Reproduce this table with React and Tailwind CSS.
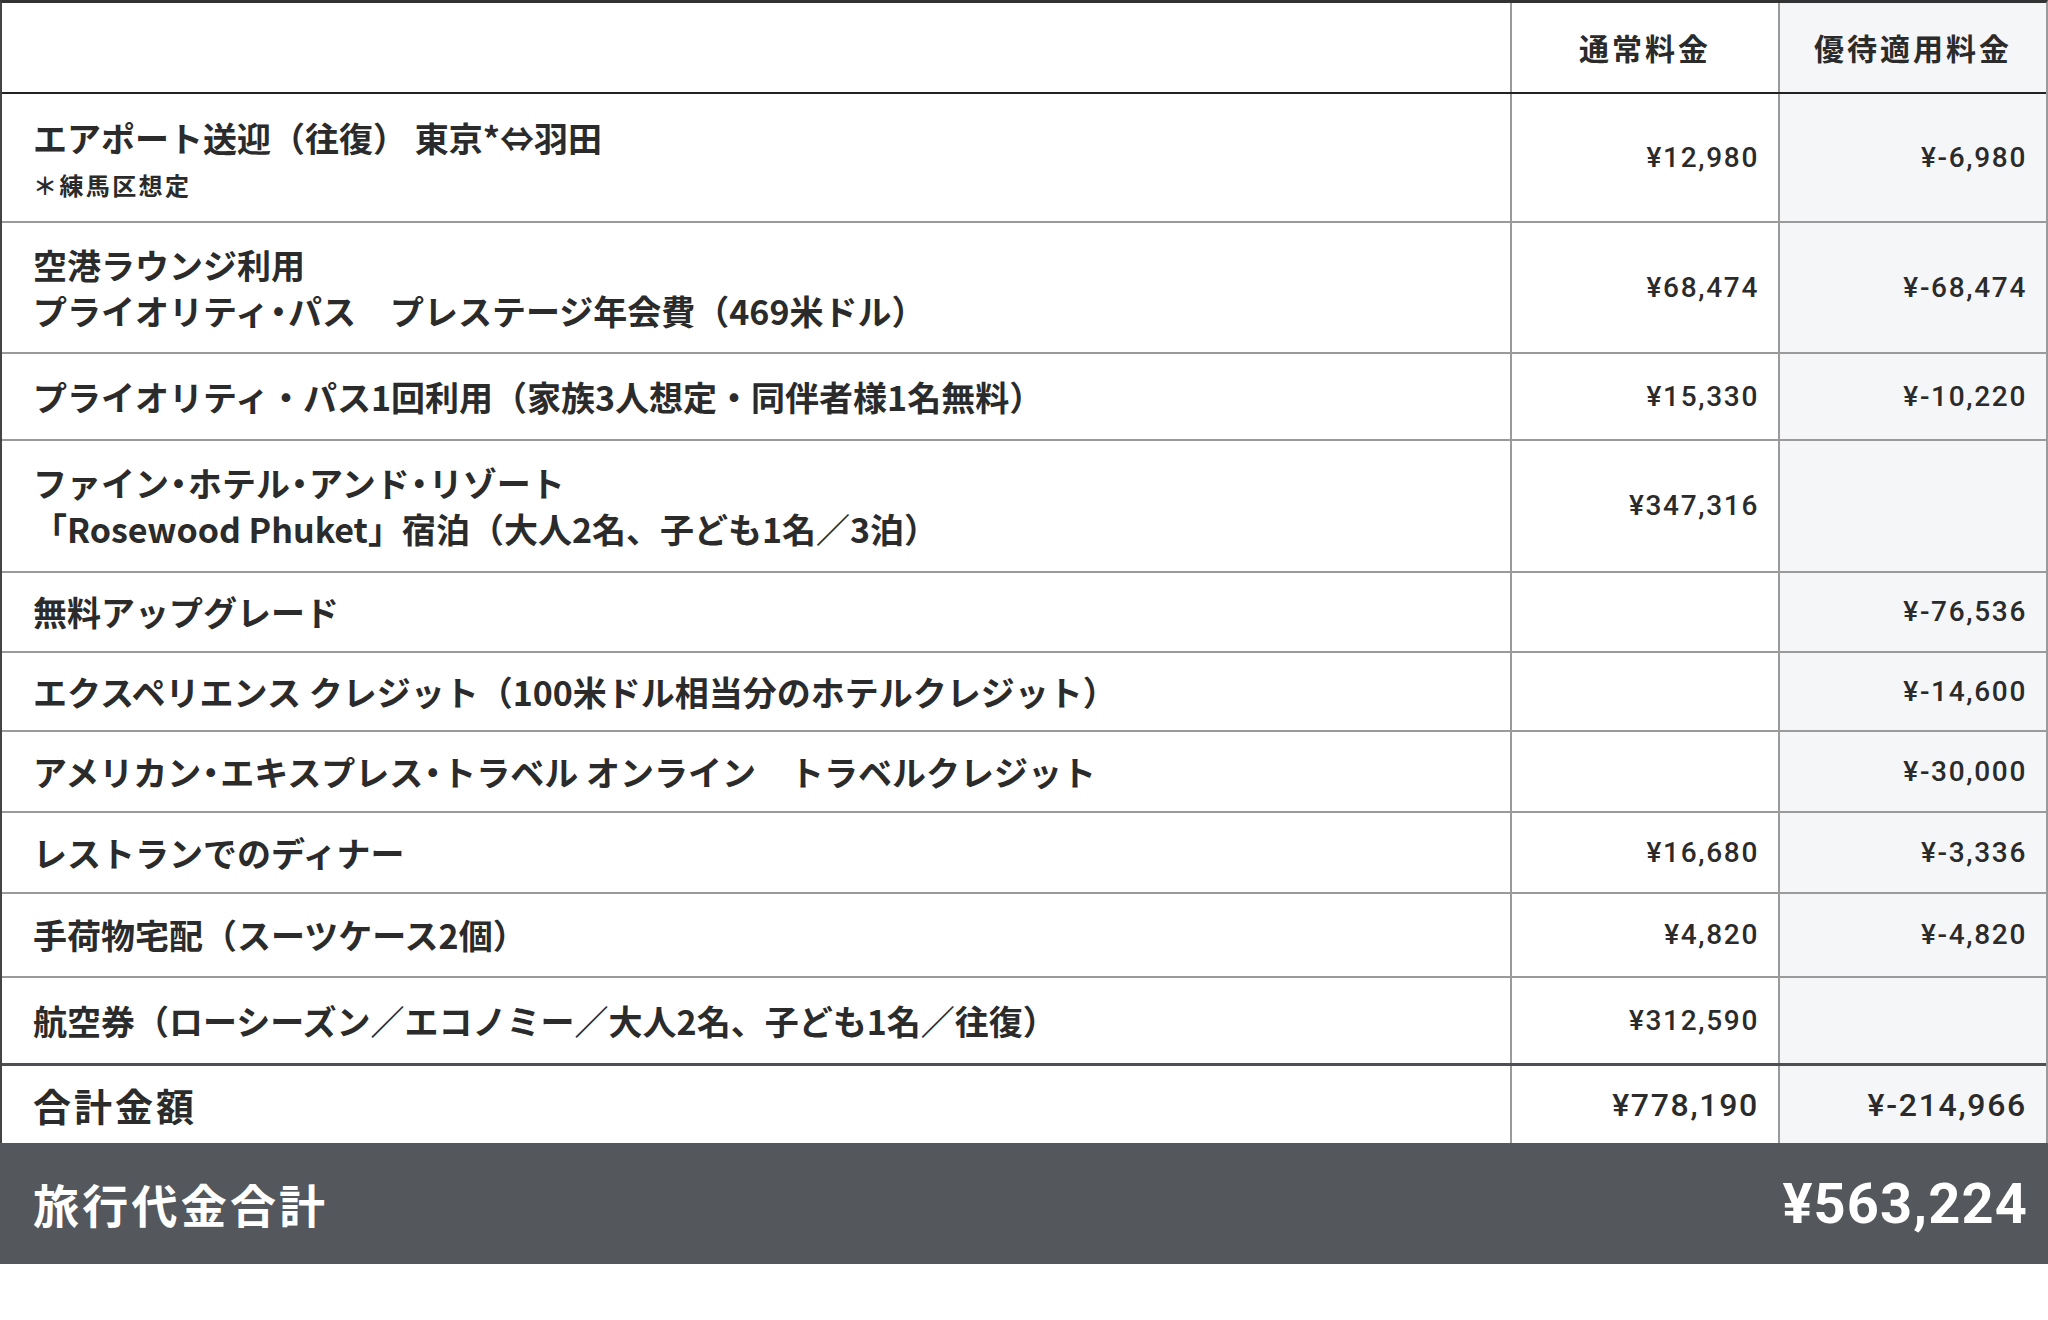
const jp = "font-['Noto_Sans_CJK_JP',sans-serif]"
const num = "font-['Roboto','Noto_Sans_CJK_JP',sans-serif]"

const rows = [
    {
        h: 'h-[129px]',
        lines: ['エアポート送迎（往復） 東京*⇔羽田'],
        note: '＊練馬区想定',
        normal: '¥12,980',
        special: '¥-6,980',
    },
    {
        h: 'h-[131px]',
        lines: ['空港ラウンジ利用', 'プライオリティ・パス　プレステージ年会費（469米ドル）'],
        normal: '¥68,474',
        special: '¥-68,474',
    },
    {
        h: 'h-[87px]',
        lines: ['プライオリティ・パス1回利用（家族3人想定・同伴者様1名無料）'],
        normal: '¥15,330',
        special: '¥-10,220',
        wideDots: true,
    },
    {
        h: 'h-[132px]',
        lines: ['ファイン・ホテル・アンド・リゾート', '「Rosewood Phuket」宿泊（大人2名、子ども1名／3泊）'],
        normal: '¥347,316',
        special: '',
    },
    { h: 'h-[80px]', lines: ['無料アップグレード'], normal: '', special: '¥-76,536' },
    {
        h: 'h-[79px]',
        lines: ['エクスペリエンス クレジット（100米ドル相当分のホテルクレジット）'],
        normal: '',
        special: '¥-14,600',
    },
    {
        h: 'h-[81px]',
        lines: ['アメリカン・エキスプレス・トラベル オンライン　トラベルクレジット'],
        normal: '',
        special: '¥-30,000',
    },
    { h: 'h-[81px]', lines: ['レストランでのディナー'], normal: '¥16,680', special: '¥-3,336' },
    { h: 'h-[84px]', lines: ['手荷物宅配（スーツケース2個）'], normal: '¥4,820', special: '¥-4,820' },
    {
        h: 'h-[88px]',
        lines: ['航空券（ローシーズン／エコノミー／大人2名、子ども1名／往復）'],
        normal: '¥312,590',
        special: '',
        last: true,
    },
]

// the middle dot is set proportional (tight) in the original
function Label({ text, wide }) {
    if (wide) return text
    const parts = text.split('・')
    return parts.map((p, i) => (
        <span key={i}>
            {p}
            {i < parts.length - 1 && <span className="px-[1px] [font-feature-settings:'palt']">・</span>}
        </span>
    ))
}

function PriceRow({ row }) {
    const border = row.last ? 'border-b-[3px] border-[#4d4f53]' : 'border-b-2 border-[#9a9a9a]'
    return (
        <div className={`grid grid-cols-[1508px_268px_1fr] ${row.h} ${border}`}>
            <div className={`flex flex-col justify-center pl-[31px] text-[34px] font-bold text-[#2b2b2b] ${jp}`}>
                {row.lines.map((l, i) => (
                    <div key={i} className="leading-[46px] whitespace-nowrap">
                        <Label text={l} wide={row.wideDots} />
                    </div>
                ))}
                {row.note && (
                    <div className="mt-[8px] text-[24px] leading-[32px] tracking-[0.1em]">{row.note}</div>
                )}
            </div>
            <div className={`flex items-center justify-end pr-[19px] border-l-2 border-[#9a9a9a] text-[28px] font-medium tracking-[0.06em] text-[#2b2b2b] ${num}`}>
                {row.normal}
            </div>
            <div className={`flex items-center justify-end pr-[19px] border-l-2 border-[#9a9a9a] bg-[#f5f6f8] text-[28px] font-medium tracking-[0.06em] text-[#2b2b2b] ${num}`}>
                {row.special}
            </div>
        </div>
    )
}

export default function App() {
    return (
        <div className="w-[2048px] h-[1320px] bg-white">
            <div className="border-t-[3px] border-t-[#333] border-l-2 border-l-[#444] border-r-2 border-r-[#9a9a9a]">
                <div className={`grid grid-cols-[1508px_268px_1fr] h-[91px] border-b-2 border-[#222] text-[30px] font-bold tracking-[0.1em] text-[#2b2b2b] ${jp}`}>
                    <div />
                    <div className="flex items-center justify-center border-l-2 border-[#9a9a9a]">通常料金</div>
                    <div className="flex items-center justify-center border-l-2 border-[#9a9a9a] bg-[#f5f6f8]">優待適用料金</div>
                </div>

                {rows.map((r, i) => (
                    <PriceRow key={i} row={r} />
                ))}

                <div className="grid grid-cols-[1508px_268px_1fr] h-[77px]">
                    <div className={`flex items-center pl-[31px] text-[38px] font-bold tracking-[0.08em] text-[#2b2b2b] ${jp}`}>
                        合計金額
                    </div>
                    <div className={`flex items-center justify-end pr-[19px] border-l-2 border-[#9a9a9a] text-[32px] font-medium tracking-[0.053em] text-[#2b2b2b] ${num}`}>
                        ¥778,190
                    </div>
                    <div className={`flex items-center justify-end pr-[19px] border-l-2 border-[#9a9a9a] bg-[#f5f6f8] text-[32px] font-medium tracking-[0.053em] text-[#2b2b2b] ${num}`}>
                        ¥-214,966
                    </div>
                </div>
            </div>

            <div className="flex items-center justify-between h-[121px] bg-[#54575c] text-white">
                <div className={`pl-[33px] text-[46px] font-bold tracking-[0.07em] ${jp}`}>旅行代金合計</div>
                <div className={`pr-[20px] text-[56px] font-bold tracking-[0.02em] ${num}`}>¥563,224</div>
            </div>
        </div>
    )
}
